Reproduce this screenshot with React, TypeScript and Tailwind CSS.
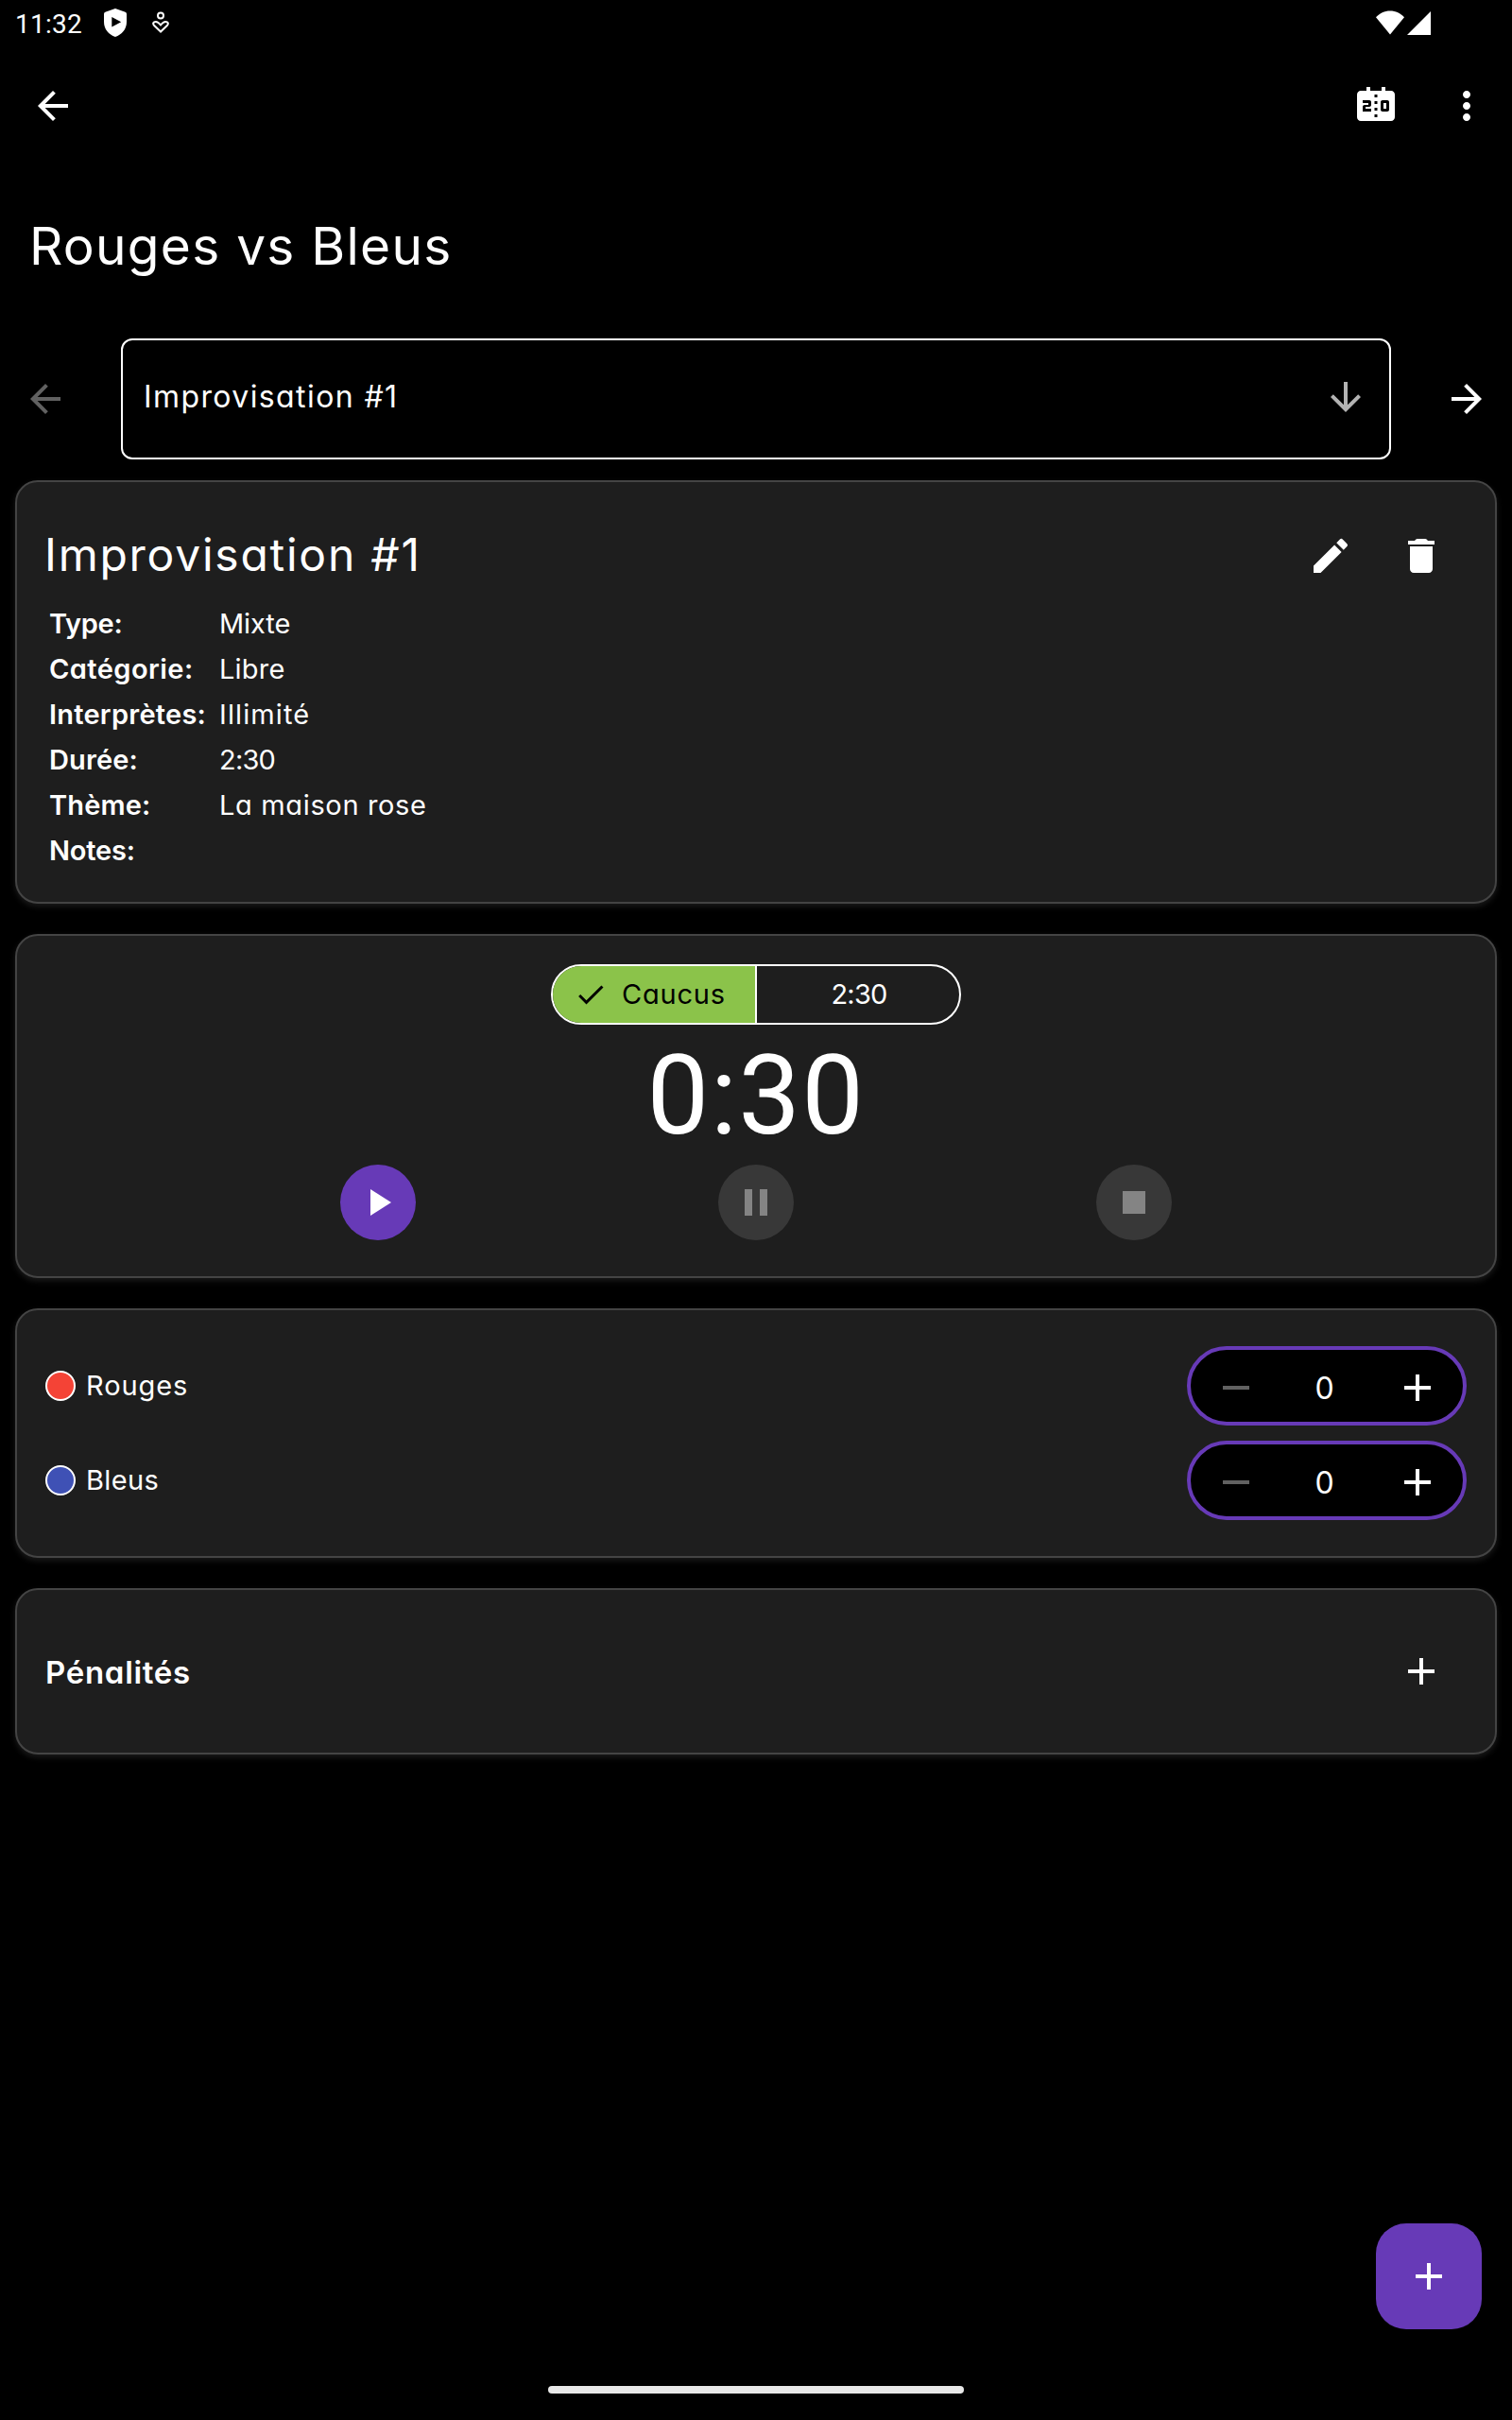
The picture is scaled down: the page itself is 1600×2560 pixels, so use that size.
import type { ReactNode } from "react";
import {
  MdAdd,
  MdArrowBack,
  MdArrowDownward,
  MdArrowForward,
  MdCheck,
  MdEdit,
  MdMoreVert,
  MdPause,
  MdPlayArrow,
  MdRemove,
  MdScoreboard,
  MdStop,
} from "react-icons/md";

const details = [
  { label: "Type:", value: "Mixte", labelSpacing: "tracking-[-0.3px]", valueSpacing: "tracking-[-0.1px]" },
  { label: "Catégorie:", value: "Libre", labelSpacing: "tracking-[0.45px]", valueSpacing: "tracking-[0.2px]" },
  { label: "Interprètes:", value: "Illimité", labelSpacing: "tracking-[0.25px]", valueSpacing: "tracking-[1.1px]" },
  { label: "Durée:", value: "2:30", labelSpacing: "tracking-[0.15px]", valueSpacing: "tracking-[-0.8px]" },
  { label: "Thème:", value: "La maison rose", labelSpacing: "tracking-[0.15px]", valueSpacing: "tracking-[0.65px]" },
  { label: "Notes:", value: "", labelSpacing: "tracking-[-0.2px]", valueSpacing: "" },
];

const teams = [
  { name: "Rouges", color: "bg-[#f44336]", spacing: "tracking-[0.9px]", points: 0 },
  { name: "Bleus", color: "bg-[#3f51b5]", spacing: "tracking-[0.35px]", points: 0 },
];

function Card({ className, children }: { className: string; children: ReactNode }) {
  return (
    <section
      className={`rounded-[24px] border-2 border-[#444444] bg-[#1e1e1e] shadow-[0_3px_6px_rgba(255,255,255,0.1)] ${className}`}
    >
      {children}
    </section>
  );
}

function TrashIcon() {
  return (
    <svg viewBox="0 0 24 24" className="size-12" fill="currentColor">
      <path d="M6 19c0 1.1.9 2 2 2h8c1.1 0 2-.9 2-2V7H6v12zM18.5 4h-3l-.71-.71c-.18-.18-.44-.29-.7-.29H9.91c-.26 0-.52.11-.7.29L8.5 4H5v2h14V4z" />
    </svg>
  );
}

function StatusBar() {
  return (
    <div className="flex h-12 items-start justify-between text-white">
      <div className="flex items-start">
        <span className="ml-4 mt-[10px] w-[72px] font-['Roboto',sans-serif] text-[28px] leading-8 tracking-[0.25px]">
          11:32
        </span>
        <svg viewBox="0 0 24 30" className="ml-[22px] mt-[9px] h-[30px] w-6" fill="currentColor">
          <path
            fillRule="evenodd"
            d="M12 0 22.6 3.7Q24 4.2 24 5.7V14C24 22 19 27.6 12 30 5 27.6 0 22 0 14V5.7Q0 4.2 1.4 3.7ZM8.3 9V19.6L18.2 14.3Z"
          />
        </svg>
        <svg viewBox="0 0 18 24" className="ml-[27px] mt-3 h-6 w-[18px]" fill="none" stroke="currentColor" strokeWidth="2">
          <circle cx="9" cy="4.4" r="3" />
          <path d="M9 21.5 2.2 15C.3 13 1.2 11 3.8 11 6 11 7.5 12.600 9 14.500 10.500 12.600 12 11 14.200 11c2.600 0 3.500 2 1.600 4Z" />
        </svg>
      </div>
      <div className="mr-[86px] mt-[11px] flex gap-[3px]">
        <svg viewBox="0 0 30 26" className="h-[26px] w-[30px]" fill="currentColor">
          <path d="M15 25.500 0 7.200C4 3 9 .5 15 .5S26 3 30 7.200Z" />
        </svg>
        <svg viewBox="0 0 25 26" className="h-[26px] w-[25px]" fill="currentColor">
          <path d="M25 1V26H0Z" />
        </svg>
      </div>
    </div>
  );
}

function Counter({ value }: { value: number }) {
  return (
    <div className="flex h-[84px] w-[296px] items-center justify-between rounded-full border-4 border-[#673ab7] bg-black px-6 pt-1">
      <MdRemove className="size-12 text-[#616161]" />
      <span className="mr-[5px] mt-px text-[32px] leading-10">{value}</span>
      <MdAdd className="size-12" />
    </div>
  );
}

export default function App() {
  return (
    <div className="flex h-[2560px] w-[1600px] flex-col bg-black font-['Inter',sans-serif] text-white [font-feature-settings:'cv11']">
      <StatusBar />

      <header className="flex h-32 items-center justify-between pl-8 pr-6">
        <MdArrowBack className="size-12" />
        <div className="flex gap-12">
          <MdScoreboard className="size-12" />
          <MdMoreVert className="size-12" />
        </div>
      </header>

      <h1 className="ml-[31px] mt-[52px] h-16 text-[55px] leading-[64px] tracking-[1.25px]">Rouges vs Bleus</h1>

      <div className="mt-[66px] flex h-32 items-center justify-between px-6">
        <MdArrowBack className="size-12 text-[#616161]" />
        <div className="flex h-32 w-[1344px] items-center justify-between rounded-[12px] border-2 border-white pb-1 pl-[22px] pr-[22px]">
          <span className="text-[32px] leading-10 tracking-[1.4px]">Improvisation #1</span>
          <MdArrowDownward className="size-12 text-[#b3b3b3]" />
        </div>
        <MdArrowForward className="size-12" />
      </div>

      <main className="mx-4 mt-[22px] flex flex-col gap-8">
        <Card className="h-[448px] pl-[29px] pr-[54px] pt-[46px]">
          <div className="flex h-16 items-center justify-between">
            <h2 className="mb-[3px] text-[48px] leading-[64px] tracking-[1.75px]">Improvisation #1</h2>
            <div className="flex gap-12">
              <MdEdit className="size-12" />
              <TrashIcon />
            </div>
          </div>
          <dl className="ml-[5px] mt-4 grid grid-cols-[180px_1fr] text-[29px] leading-[48px]">
            {details.map((d) => (
              <div key={d.label} className="contents">
                <dt className={`font-semibold ${d.labelSpacing}`}>{d.label}</dt>
                <dd className={d.valueSpacing}>{d.value}</dd>
              </div>
            ))}
          </dl>
        </Card>

        <Card className="flex h-[364px] flex-col items-center pt-[30px]">
          <div className="flex h-16 w-[434px] overflow-hidden rounded-full border-2 border-white text-[29px] leading-[60px]">
            <div className="flex w-[216px] items-center border-r-2 border-white bg-[#8bc34a] pl-[22px] text-black">
              <MdCheck className="size-9" />
              <span className="ml-[15px] tracking-[0.8px]">Caucus</span>
            </div>
            <div className="flex-1 pl-0.5 text-center tracking-[-0.8px]">2:30</div>
          </div>
          <div className="mt-[15px] h-[120px] font-['Roboto',sans-serif] text-[117px] leading-[120px] tracking-[1.3px]">
            0:30
          </div>
          <div className="mt-[13px] grid w-[1200px] grid-cols-3 justify-items-center">
            <button className="flex size-20 items-center justify-center rounded-full bg-[#673ab7]">
              <MdPlayArrow className="size-12" />
            </button>
            <button className="flex size-20 items-center justify-center rounded-full bg-[#383838] text-[#848484]">
              <MdPause className="size-12" />
            </button>
            <button className="flex size-20 items-center justify-center rounded-full bg-[#383838] text-[#848484]">
              <MdStop className="size-12" />
            </button>
          </div>
        </Card>

        <Card className="flex h-[264px] flex-col gap-4 px-[30px] pt-[38px]">
          {teams.map((t) => (
            <div key={t.name} className="flex h-[84px] items-center">
              <span className={`size-8 rounded-full border-2 border-white ${t.color}`} />
              <span className={`ml-[11px] flex-1 text-[29px] leading-10 ${t.spacing}`}>{t.name}</span>
              <Counter value={t.points} />
            </div>
          ))}
        </Card>

        <Card className="flex h-44 items-center justify-between pl-[30px] pr-[54px]">
          <h3 className="mt-0.5 text-[33px] font-semibold leading-10 tracking-[0.7px]">Pénalités</h3>
          <MdAdd className="size-12" />
        </Card>
      </main>

      <button className="mr-8 mt-auto flex size-28 shrink-0 items-center justify-center self-end rounded-[32px] bg-[#673ab7]">
        <MdAdd className="size-12" />
      </button>
      <div className="mb-7 mt-[60px] h-2 w-[440px] shrink-0 self-center rounded-full bg-[#e8e8e8]" />
    </div>
  );
}
